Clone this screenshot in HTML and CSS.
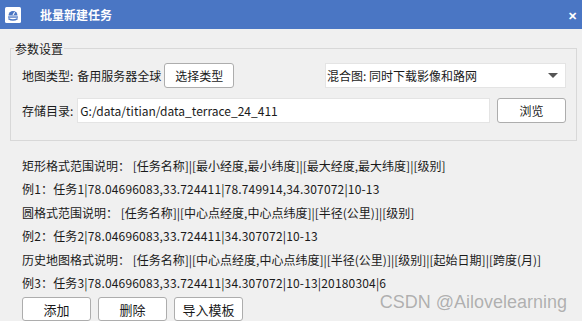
FILE: index.html
```html
<!DOCTYPE html>
<html lang="zh-CN">
<head>
    <meta charset="UTF-8">
    <meta name="viewport" content="width=device-width, initial-scale=1.0">
    <title>批量新建任务</title>
    <link rel="stylesheet" href="styles.css">
</head>
<body>
    <div class="window">
        <div class="titlebar">
            <svg class="app-icon" width="16" height="16" viewBox="0 0 16 16">
                <rect x="0" y="0" width="16" height="16" rx="1.5" fill="#ffffff"/>
                <path d="M3.5 8.5 A4.5 4.5 0 0 1 12.5 8.5 Z" fill="#4a76c4"/>
                <path d="M8 8 L9.6 5.2" stroke="#ffffff" stroke-width="1.1"/>
                <rect x="3" y="9.4" width="10" height="1.3" fill="#4a76c4"/>
                <path d="M3.4 11.6 Q8 14.4 12.6 11.6" stroke="#4a76c4" stroke-width="1.3" fill="none"/>
            </svg>
            <span class="title">批量新建任务</span>
            <span class="close">&#x2715;</span>
        </div>

        <fieldset class="group">
            <legend>参数设置</legend>
            <div class="row">
                <span class="label">地图类型:</span>
                <span class="value">备用服务器全球</span>
                <button class="btn btn-type">选择类型</button>
                <div class="combo">
                    <span>混合图: 同时下载影像和路网</span>
                    <span class="arrow"></span>
                </div>
            </div>
            <div class="row">
                <span class="label">存储目录:</span>
                <div class="input">G:/data/titian/data_terrace_24_411</div>
                <button class="btn btn-browse">浏览</button>
            </div>
        </fieldset>

        <div class="help">
            <p>矩形格式范围说明：&nbsp;[任务名称]|[最小经度,最小纬度]|[最大经度,最大纬度]|[级别]</p>
            <p class="example">例1：任务1|78.04696083,33.724411|78.749914,34.307072|10-13</p>
            <p>圆格式范围说明：&nbsp;[任务名称]|[中心点经度,中心点纬度]|[半径(公里)]|[级别]</p>
            <p class="example">例2：任务2|78.04696083,33.724411|34.307072|10-13</p>
            <p>历史地图格式说明：&nbsp;[任务名称]|[中心点经度,中心点纬度]|[半径(公里)]|[级别]|[起始日期]|[跨度(月)]</p>
            <p class="example">例3：任务3|78.04696083,33.724411|34.307072|10-13|20180304|6</p>
        </div>

        <div class="actions">
            <button class="btn btn-action">添加</button>
            <button class="btn btn-action">删除</button>
            <button class="btn btn-action">导入模板</button>
        </div>

        <div class="watermark">CSDN @Ailovelearning</div>
    </div>
</body>
</html>
```

FILE: styles.css
```css
body {
    margin: 0;
    font-family: "Noto Sans CJK SC", "Noto Sans", sans-serif;
    font-size: 12px;
    color: #1a1a1a;
    background-color: #f0f0f0;
}

.window {
    position: relative;
    height: 321px;
    overflow: hidden;
}

.titlebar {
    display: flex;
    align-items: center;
    height: 29px;
    padding-left: 5px;
    background-color: #4a76c4;
    color: #ffffff;
}

.app-icon {
    margin-top: 1px;
}

.title {
    margin-left: 19px;
    font-size: 12px;
    font-weight: bold;
}

.close {
    margin-left: auto;
    margin-right: 5px;
    font-size: 11px;
    font-weight: bold;
}

.group {
    margin: 11px 5px 0 10px;
    padding: 6px 10px 17px 11px;
    border: 1px solid #d8d8d8;
    border-radius: 0;
}

.group legend {
    padding: 0 1px;
    margin-left: -8px;
    line-height: 17px;
}

.row {
    display: flex;
    align-items: center;
    height: 25px;
}

.row + .row {
    margin-top: 10px;
}

.value {
    margin-left: 4px;
}

.btn {
    height: 25px;
    padding: 0;
    border: 1px solid #adadad;
    border-radius: 3px;
    background-color: #ffffff;
    font-family: inherit;
    font-size: 12px;
    color: #1a1a1a;
}

.btn-type {
    width: 70px;
    margin-left: 3px;
}

.combo {
    display: flex;
    align-items: center;
    width: 241px;
    height: 25px;
    margin-left: auto;
    padding-left: 1px;
    box-sizing: border-box;
    background-color: #ffffff;
    border: 1px solid #e4e4e4;
}

.arrow {
    margin-left: auto;
    margin-right: 7px;
    width: 0;
    height: 0;
    border-left: 5px solid transparent;
    border-right: 5px solid transparent;
    border-top: 5px solid #555555;
}

.input {
    flex: 1;
    height: 25px;
    margin-left: 4px;
    padding-left: 2px;
    box-sizing: border-box;
    background-color: #ffffff;
    border: 1px solid #e4e4e4;
    font-size: 12px;
    line-height: 23px;
}

.btn-browse {
    width: 69px;
    margin-left: 7px;
}

.help {
    margin-top: 13px;
    padding-left: 22px;
}

.help p {
    margin: 0;
    line-height: 23.4px;
    white-space: nowrap;
}

.help .example {
    letter-spacing: 0.17px;
}

.actions {
    display: flex;
    gap: 7px;
    margin-top: 3px;
    padding-left: 22px;
}

.btn-action {
    width: 69px;
    height: 24px;
    font-size: 13px;
}

.watermark {
    position: absolute;
    right: 15px;
    bottom: 8px;
    font-family: "Liberation Sans", Arial, sans-serif;
    font-size: 18px;
    color: rgba(120, 120, 120, 0.55);
}
```
